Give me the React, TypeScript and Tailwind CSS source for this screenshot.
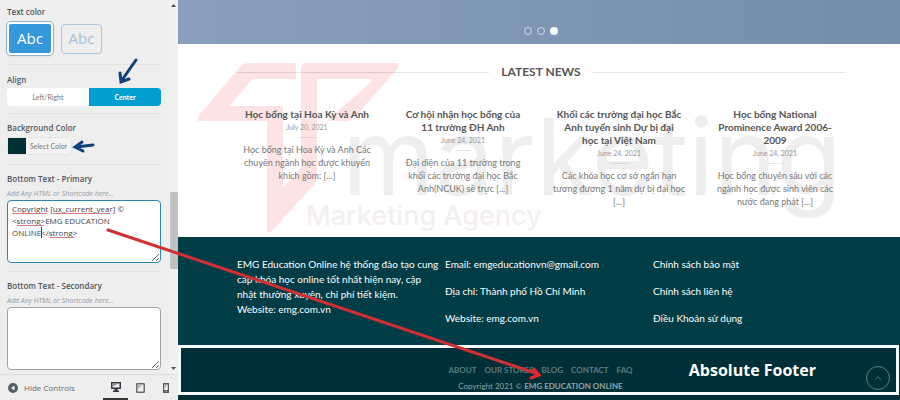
import React from 'react';
import { ChevronUp } from 'lucide-react';

interface Post {
  title: string;
  date: string;
  excerpt: string;
}

const posts: Post[] = [
  {
    title: 'Học bổng tại Hoa Kỳ và Anh',
    date: 'July 20, 2021',
    excerpt: 'Học bổng tại Hoa Kỳ và Anh Các chuyên ngành học được khuyến khích gồm: [...]',
  },
  {
    title: 'Cơ hội nhận học bổng của 11 trường ĐH Anh',
    date: 'June 24, 2021',
    excerpt: 'Đại diện của 11 trường trong khối\u00a0các trường đại học Bắc Anh(NCUK) sẽ trực [...]',
  },
  {
    title: 'Khối các trường đại học Bắc Anh tuyển sinh Dự bị đại học tại Việt Nam',
    date: 'June 24, 2021',
    excerpt: 'Các khóa học cơ sở ngắn hạn tương đương 1 năm dự bị đại học [...]',
  },
  {
    title: 'Học bổng National Prominence Award 2006-2009',
    date: 'June 24, 2021',
    excerpt: 'Học bổng chuyên sâu với các ngành học được sinh viên các nước đang phát [...]',
  },
];

const navLinks = ['About', 'Our Stores', 'Blog', 'Contact', 'FAQ'];

const copyrightHtml = 'Copyright [ux_current_year] ©\n<strong>EMG EDUCATION\nONLINE</strong>';

const Sidebar: React.FC = () => {
  return (
    <aside className="w-[178px] shrink-0 flex flex-col bg-[#eeeeee] text-[#50575e] font-['Open_Sans',sans-serif]">
      <div className="flex-1 flex">
        <div className="flex-1 min-w-0 pl-[7px] pr-2 pb-1">
          <fieldset className="pt-1 pb-[9px] border-b border-[#e2e2e2]">
            <legend className="float-left w-full text-[8px] leading-4 font-semibold">Text color</legend>
            <div className="clear-both flex items-center gap-2 pt-[2px]">
              <button className="h-[33px] w-[46px] rounded-sm border-2 border-white bg-[#3498db] text-white text-[15px] leading-none ring-1 ring-[#8db4c9] shadow">Abc</button>
              <button className="h-[30px] w-[41px] rounded-sm border border-[#a9c7e0] text-[#a3c2dd] text-[15px] leading-none">Abc</button>
            </div>
          </fieldset>

          <div className="pt-[7px] pb-[7px] border-b border-[#e2e2e2]">
            <p className="text-[8px] leading-4 font-semibold">Align</p>
            <div className="flex text-[7px] leading-[18px] font-['Lato',sans-serif]">
              <button className="flex-auto rounded-l-sm bg-white text-[#777777]">Left/Right</button>
              <button className="flex-auto rounded-r-sm bg-[#009fd0] text-white font-bold">Center</button>
            </div>
          </div>

          <div className="pt-[6px] pb-[9px] border-b border-[#e2e2e2]">
            <p className="text-[8px] leading-4 font-semibold">Background Color</p>
            <button className="mt-[1px] flex h-[18px] items-center rounded-sm border border-[#e4e4e4] bg-[#f3f3f3] text-[7px] text-[#777777] font-['Lato',sans-serif]">
              <span className="h-4 w-[18px] bg-[#003033]" />
              <span className="px-1">Select Color</span>
            </button>
          </div>

          <div className="pt-[6px] pb-2 border-b border-[#e2e2e2]">
            <label htmlFor="primary" className="block text-[8px] leading-4 font-semibold">Bottom Text - Primary</label>
            <p className="text-[7px] leading-[13px] italic text-[#999999]">Add Any HTML or Shortcode here...</p>
            <div className="relative">
              <textarea
                id="primary"
                defaultValue={copyrightHtml}
                spellCheck={false}
                className="block h-[63px] w-full rounded-sm border border-[#2f83b0] bg-white px-1 py-[2px] text-[8px] leading-3 text-[#444444]"
              />
              {/* spell check marks and caret */}
              <svg className="absolute left-0 top-0 w-[154px] h-[63px] pointer-events-none" viewBox="0 0 154 63" fill="none">
                <path d="M5 13.500H40M46 13.500H103M10 25.500H37M43 37.500H67" stroke="#d9777a" />
                <path d="M34.500 27V38" stroke="#444444" />
              </svg>
            </div>
          </div>

          <div className="pt-[6px]">
            <label htmlFor="secondary" className="block text-[8px] leading-4 font-semibold">Bottom Text - Secondary</label>
            <p className="text-[7px] leading-[13px] italic text-[#999999]">Add Any HTML or Shortcode here...</p>
            <textarea id="secondary" className="block h-[63px] w-full rounded-sm border border-[#a0a3a8] bg-white" />
          </div>
        </div>

        {/* scrollbar */}
        <div className="w-[9px] flex flex-col items-center bg-[#f1f1f1] py-1">
          <svg className="w-[5px] h-[3px]" viewBox="0 0 5 3"><path d="M0 3L2.500 0L5 3z" fill="#505050" /></svg>
          <div className="mt-[185px] h-[77px] w-2 bg-[#c1c1c1]" />
          <svg className="mt-auto w-[5px] h-[3px]" viewBox="0 0 5 3"><path d="M0 0L2.500 3L5 0z" fill="#505050" /></svg>
        </div>
      </div>

      <div className="flex h-[26px] items-stretch border-t border-[#dddddd] pl-2">
        <button className="flex items-center gap-[6px] text-[8px] text-[#666666]">
          <svg className="size-[10px]" viewBox="0 0 10 10">
            <circle cx="5" cy="5" r="5" fill="#555d66" />
            <path d="M6.500 2.500L3 5L6.500 7.500z" fill="#eeeeee" />
          </svg>
          Hide Controls
        </button>
        <div className="ml-auto flex">
          <button aria-label="Desktop" className="w-[25px] flex items-center justify-center border-b-2 border-[#32373c]">
            <svg className="size-[10px]" viewBox="0 0 10 10">
              <path d="M0 0H10V7H6.500V8.500H8V10H2V8.500H3.500V7H0zM1.500 1.500V5.500H8.500V1.500z" fill="#32373c" fillRule="evenodd" />
              <path d="M2 4.500L7 1.500H2z" fill="#8a8f94" />
            </svg>
          </button>
          <button aria-label="Tablet" className="w-[25px] flex items-center justify-center">
            <svg className="w-[9px] h-[10px]" viewBox="0 0 9 10">
              <rect x="0.750" y="0.750" width="7.500" height="8.500" rx="0.500" fill="none" stroke="#666c72" strokeWidth="1.500" />
              <path d="M2 6L6 2H2z" fill="#b5b8bb" />
            </svg>
          </button>
          <button aria-label="Mobile" className="w-[25px] flex items-center justify-center">
            <svg className="w-[6px] h-[10px]" viewBox="0 0 6 10">
              <path d="M0 0H6V10H0zM1.200 1.500V7H4.800V1.500zM2.500 8V9H3.500V8z" fill="#555b61" fillRule="evenodd" />
              <path d="M1.500 5.500L4 2H1.500z" fill="#a5a9ad" />
            </svg>
          </button>
        </div>
      </div>
    </aside>
  );
};

const Watermark: React.FC = () => {
  return (
    <div className="absolute left-[19px] top-[19px] pointer-events-none" aria-hidden="true">
      <svg className="w-[202px] h-[170px]" viewBox="197 63 202 170" fill="#fde3e3">
        <path d="M296 63H249Q243 63 239 68L199 115Q197 118 198 121H267V232H271L311 188Q317 182 317 174V79H368Q374 79 370 83L327 121H346Q352 121 356 116L398 68Q401 63 396 63H307Q301 63 301 69V168L283 188V106H229L251 81Q253 79 256 79H296z" />
      </svg>
      <p className="absolute left-[145px] top-[44px] whitespace-nowrap font-['Inter',sans-serif] text-[106px] leading-[100px] text-[#eeeeee]">marketing</p>
      <p className="absolute left-[109px] top-[138px] whitespace-nowrap font-['Inter',sans-serif] font-medium text-[27px] leading-[30px] text-[#f4efef]">Marketing Agency</p>
    </div>
  );
};

const LatestNews: React.FC = () => {
  return (
    <section className="relative h-[193px] bg-white pl-[51px] pr-[47px] pt-[18px]">
      <Watermark />
      <div className="relative flex items-center gap-3 px-2">
        <span className="flex-1 border-t border-black/10" />
        <h2 className="text-xs leading-5 font-bold text-[#555555]">LATEST NEWS</h2>
        <span className="flex-1 border-t border-black/10" />
      </div>
      <div className="relative mt-[26px] grid grid-cols-4 text-center">
        {posts.map((post) => (
          <article key={post.title} className="flex flex-col items-center px-[11px]">
            <h3 className="px-1 text-[10px] leading-[13px] font-bold text-[#555555]">{post.title}</h3>
            <time className="text-[7px] leading-3 text-[#999999]">{post.date}</time>
            <span className="mt-1 w-4 border-t border-black/10" />
            <p className="mt-[5px] text-[9px] leading-[13px] text-[#777777]">{post.excerpt}</p>
          </article>
        ))}
      </div>
    </section>
  );
};

const Footer: React.FC = () => {
  return (
    <footer className="flex-1 flex flex-col bg-[#003d47] text-white">
      <div className="grid h-[108px] grid-cols-3 pl-[59px] pr-[39px] pt-5 text-[10px] leading-[15px]">
        <p className="pr-1">
          EMG Education Online hệ thống đào tạo cung cấp khóa học online tốt nhất hiện nay, cập nhật thường xuyên, chi phí tiết kiệm.
          <br />
          Website: emg.com.vn
        </p>
        <div className="flex flex-col gap-3">
          <p>Email: emgeducationvn@gmail.com</p>
          <p>Địa chỉ: Thành phố Hồ Chí Minh</p>
          <p>Website: emg.com.vn</p>
        </div>
        <div className="flex flex-col items-start gap-3">
          <a href="#">Chính sách bảo mật</a>
          <a href="#">Chính sách liên hệ</a>
          <a href="#">Điều Khoản sử dụng</a>
        </div>
      </div>

      <div className="flex-1 bg-[#003037] pb-[5px] pr-[1px]">
        <div className="relative flex h-[50px] justify-center border-[3px] border-[#f4fbfb] pl-1 pt-[15px] text-center">
          <div>
            <nav className="flex justify-center gap-2 text-[8px] leading-[14px] font-bold uppercase text-[#5d7b7f]">
              {navLinks.map((link) => (
                <a key={link} href="#">{link}</a>
              ))}
            </nav>
            <p className="text-[8px] leading-[18px] text-[#8fa5a8]">
              Copyright 2021 © <strong>EMG EDUCATION ONLINE</strong>
            </p>
          </div>
          <p className="absolute right-[80px] top-[10px] font-['Open_Sans',sans-serif] text-base leading-6 font-bold">Absolute Footer</p>
          <button aria-label="Back to top" className="absolute right-[6px] top-[18px] flex size-6 items-center justify-center rounded-full border border-[#5d7b7f] text-[#5d7b7f]">
            <ChevronUp size={10} />
          </button>
        </div>
      </div>
    </footer>
  );
};

const Annotations: React.FC = () => {
  return (
    <svg className="absolute left-0 top-0 w-[900px] h-[400px] pointer-events-none" viewBox="0 0 900 400" fill="none" strokeLinecap="round">
      <path d="M108 230L538 374" stroke="#d12f33" strokeWidth="3" />
      <path d="M534 369L539 375L531 378" stroke="#e8262b" strokeWidth="3" />
      <g stroke="#12407f" strokeWidth="3">
        <path d="M136 60L122 80M120 73L121 82L129 79" />
        <path d="M93 145L76 147M82 142L75 147L83 151" />
      </g>
    </svg>
  );
};

const App: React.FC = () => {
  return (
    <div className="relative flex min-h-screen overflow-hidden font-['Lato',sans-serif]">
      <Sidebar />
      <main className="flex-1 min-w-0 flex flex-col">
        <div className="flex h-11 items-end justify-center gap-[5px] bg-gradient-to-r from-[#8a9fbe] to-[#758cab] pl-1 pb-[9px]">
          <button aria-label="Slide 1" className="size-2 rounded-full border border-white/60" />
          <button aria-label="Slide 2" className="size-2 rounded-full border border-white/60" />
          <button aria-label="Slide 3" className="size-2 rounded-full bg-white" />
        </div>
        <LatestNews />
        <Footer />
      </main>
      <Annotations />
    </div>
  );
};

export default App;
